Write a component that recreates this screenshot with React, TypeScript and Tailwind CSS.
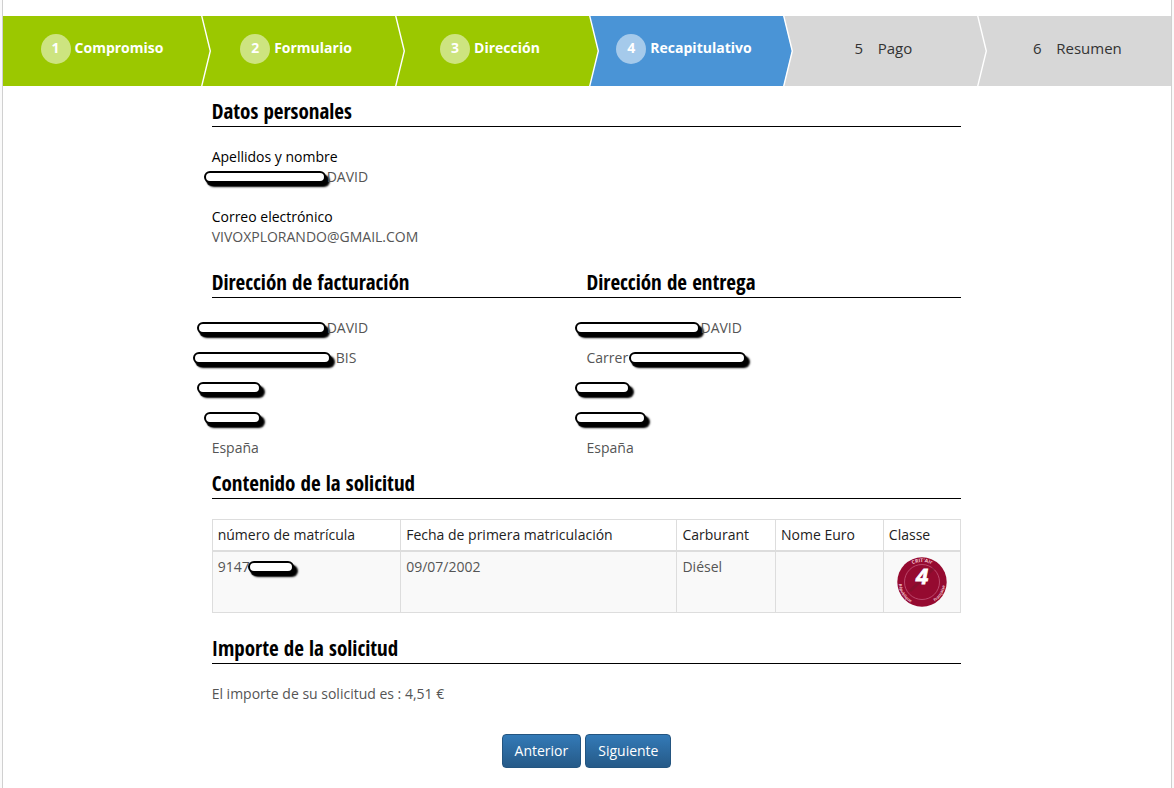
import clsx from 'clsx';
import type { ReactNode } from 'react';

const steps = [
  { label: 'Compromiso', state: 'done' },
  { label: 'Formulario', state: 'done' },
  { label: 'Dirección', state: 'done' },
  { label: 'Recapitulativo', state: 'current' },
  { label: 'Pago', state: 'pending' },
  { label: 'Resumen', state: 'pending' },
];

const stepStyles: Record<string, { item: string; badge: string; arrow: string }> = {
  done: { item: 'bg-[#9bc800] font-bold text-white', badge: 'bg-white/50', arrow: 'fill-[#9bc800]' },
  current: { item: 'bg-[#4a94d6] font-bold text-white', badge: 'bg-white/50', arrow: 'fill-[#4a94d6]' },
  pending: { item: 'bg-[#d7d7d7] text-[15px] font-normal text-[#333]', badge: '', arrow: 'fill-[#d7d7d7]' },
};

const billing = [
  { bar: '-ml-[15px] w-[129px]', after: 'DAVID' },
  { bar: '-ml-[19px] w-[138px] mr-1', after: 'BIS' },
  { bar: '-ml-[15px] w-16' },
  { bar: '-ml-2 w-[57px]' },
  { after: 'España' },
];

const delivery = [
  { bar: '-ml-3 w-[125px]', after: 'DAVID' },
  { before: 'Carrer', bar: 'w-[117px]' },
  { bar: '-ml-3 w-[55px]' },
  { bar: '-ml-3 w-[71px]' },
  { after: 'España' },
];

type Line = { before?: string; bar?: string; after?: string };

function Redacted({ className }: { className?: string }) {
  return (
    <span
      className={clsx(
        'block h-3 shrink-0 rounded-full border-2 border-black bg-white shadow-[2px_3px_1px_0px_#000,4px_4px_2px_0px_#000]',
        className
      )}
    />
  );
}

function Heading({ children }: { children: ReactNode }) {
  return (
    <h2 className="mb-5 border-b border-black pb-0.5 font-['Open_Sans_Condensed','Noto_Sans_Condensed','Liberation_Sans_Narrow','Open_Sans',sans-serif] text-[21px] leading-[26px] font-bold text-black">
      {children}
    </h2>
  );
}

function StepBar() {
  return (
    <ol className="flex h-[70px]">
      {steps.map((step, idx) => {
        const style = stepStyles[step.state];
        return (
          <li
            key={step.label}
            className={clsx('relative flex flex-1 justify-center pt-[18px] leading-7 first:pl-1', style.item)}
            aria-current={step.state === 'current' ? 'step' : undefined}
          >
            <span className="flex gap-1 pr-1">
              <span className={clsx('h-[30px] w-[30px] rounded-full text-center', style.badge)}>{idx + 1}</span>
              {step.label}
            </span>
            {idx < steps.length - 1 && (
              <svg className="absolute top-0 left-full z-10 h-full w-3 overflow-hidden" viewBox="0 0 12 70" aria-hidden="true">
                <path className={style.arrow} d="M-1 0H0.5L9 35L0.5 70H-1Z" />
                <path d="M0.5 -1L9.3 35L0.5 71" fill="none" stroke="#fff" strokeWidth="1.4" />
              </svg>
            )}
          </li>
        );
      })}
    </ol>
  );
}

function Address({ title, lines }: { title: string; lines: Line[] }) {
  return (
    <section>
      <Heading>{title}</Heading>
      <div className="space-y-2.5">
        {lines.map((line, idx) => (
          <p key={idx} className="flex h-5 items-center gap-px">
            {line.before}
            {line.bar && <Redacted className={line.bar} />}
            {line.after}
          </p>
        ))}
      </div>
    </section>
  );
}

function Sticker() {
  return (
    <svg className="mx-auto block h-[50px] w-[50px]" viewBox="0 0 50 50" role="img" aria-label="Clase 4">
      <defs>
        <path id="sticker-top" d="M5 25A20 20 0 0 1 45 25" />
        <path id="sticker-left" d="M1.9 22A23.3 23.3 0 0 0 22 48.1" />
        <path id="sticker-right" d="M28 48.1A23.3 23.3 0 0 0 48.1 22" />
      </defs>
      <circle cx="25" cy="25" r="24.7" fill="#950a30" />
      <circle cx="25" cy="25" r="17.5" fill="none" stroke="#c4577a" strokeWidth="0.8" />
      <path d="M13 34L37 11" stroke="#75142c" strokeWidth="3" opacity="0.5" />
      <g className="font-['Open_Sans',sans-serif] font-bold" fill="#f3c6d2" textAnchor="middle">
        <text fontSize="5">
          <textPath href="#sticker-top" startOffset="50%">CRIT'Air</textPath>
        </text>
        <text fontSize="4">
          <textPath href="#sticker-left" startOffset="45%">République</textPath>
        </text>
        <text fontSize="4">
          <textPath href="#sticker-right" startOffset="55%">Française</textPath>
        </text>
      </g>
      <text
        x="25"
        y="27"
        className="font-['Liberation_Sans',sans-serif] font-bold italic"
        fontSize="22"
        fill="#fff"
        stroke="#fff"
        strokeWidth="0.8"
        textAnchor="middle"
      >
        4
      </text>
    </svg>
  );
}

function RequestTable() {
  const head = ['número de matrícula', 'Fecha de primera matriculación', 'Carburant', 'Nome Euro', 'Classe'];
  return (
    <table className="w-full border-collapse border border-[#ddd] text-left">
      <thead>
        <tr>
          {head.map((label) => (
            <th key={label} scope="col" className="border border-b-2 border-[#ddd] p-[5px] font-normal text-[#222]">
              {label}
            </th>
          ))}
        </tr>
      </thead>
      <tbody>
        <tr className="bg-[#f9f9f9] align-top">
          <td className="border border-[#ddd] p-[5px]">
            <span className="flex h-5 items-center">
              9147
              <Redacted className="-ml-0.5 w-[46px]" />
            </span>
          </td>
          <td className="border border-[#ddd] p-[5px]">09/07/2002</td>
          <td className="border border-[#ddd] p-[5px]">Diésel</td>
          <td className="border border-[#ddd] p-[5px]" />
          <td className="border border-[#ddd] p-[5px]">
            <Sticker />
          </td>
        </tr>
      </tbody>
    </table>
  );
}

function Button({ children }: { children: ReactNode }) {
  return (
    <button
      type="button"
      className="h-[34px] rounded border border-[#245580] bg-linear-to-b from-[#337ab7] to-[#265a88] px-3 font-normal text-white hover:from-[#265a88]"
    >
      {children}
    </button>
  );
}

export default function App() {
  return (
    <div className="min-h-screen bg-[#fafafa] px-0.5 font-['Open_Sans',sans-serif] text-sm leading-5 font-normal text-[#555]">
      <main className="min-h-screen border-x border-[#d0d0d0] bg-white pt-4 pb-5">
        <StepBar />

        <div className="mx-auto w-2/3 pt-3 pr-[15px] pl-[14px]">
          <Heading>Datos personales</Heading>
          <dl className="mb-[22px] space-y-5">
            <div>
              <dt className="text-black">Apellidos y nombre</dt>
              <dd className="flex items-center gap-px">
                <Redacted className="-ml-2 w-[122px]" />
                DAVID
              </dd>
            </div>
            <div>
              <dt className="text-black">Correo electrónico</dt>
              <dd>VIVOXPLORANDO@GMAIL.COM</dd>
            </div>
          </dl>

          <div className="mb-3 grid grid-cols-2">
            <Address title="Dirección de facturación" lines={billing} />
            <Address title="Dirección de entrega" lines={delivery} />
          </div>

          <Heading>Contenido de la solicitud</Heading>
          <RequestTable />

          <div className="mt-[22px]">
            <Heading>Importe de la solicitud</Heading>
            <p>El importe de su solicitud es : 4,51 €</p>
          </div>

          <div className="mt-[30px] flex justify-center gap-1">
            <Button>Anterior</Button>
            <Button>Siguiente</Button>
          </div>
        </div>
      </main>
    </div>
  );
}
